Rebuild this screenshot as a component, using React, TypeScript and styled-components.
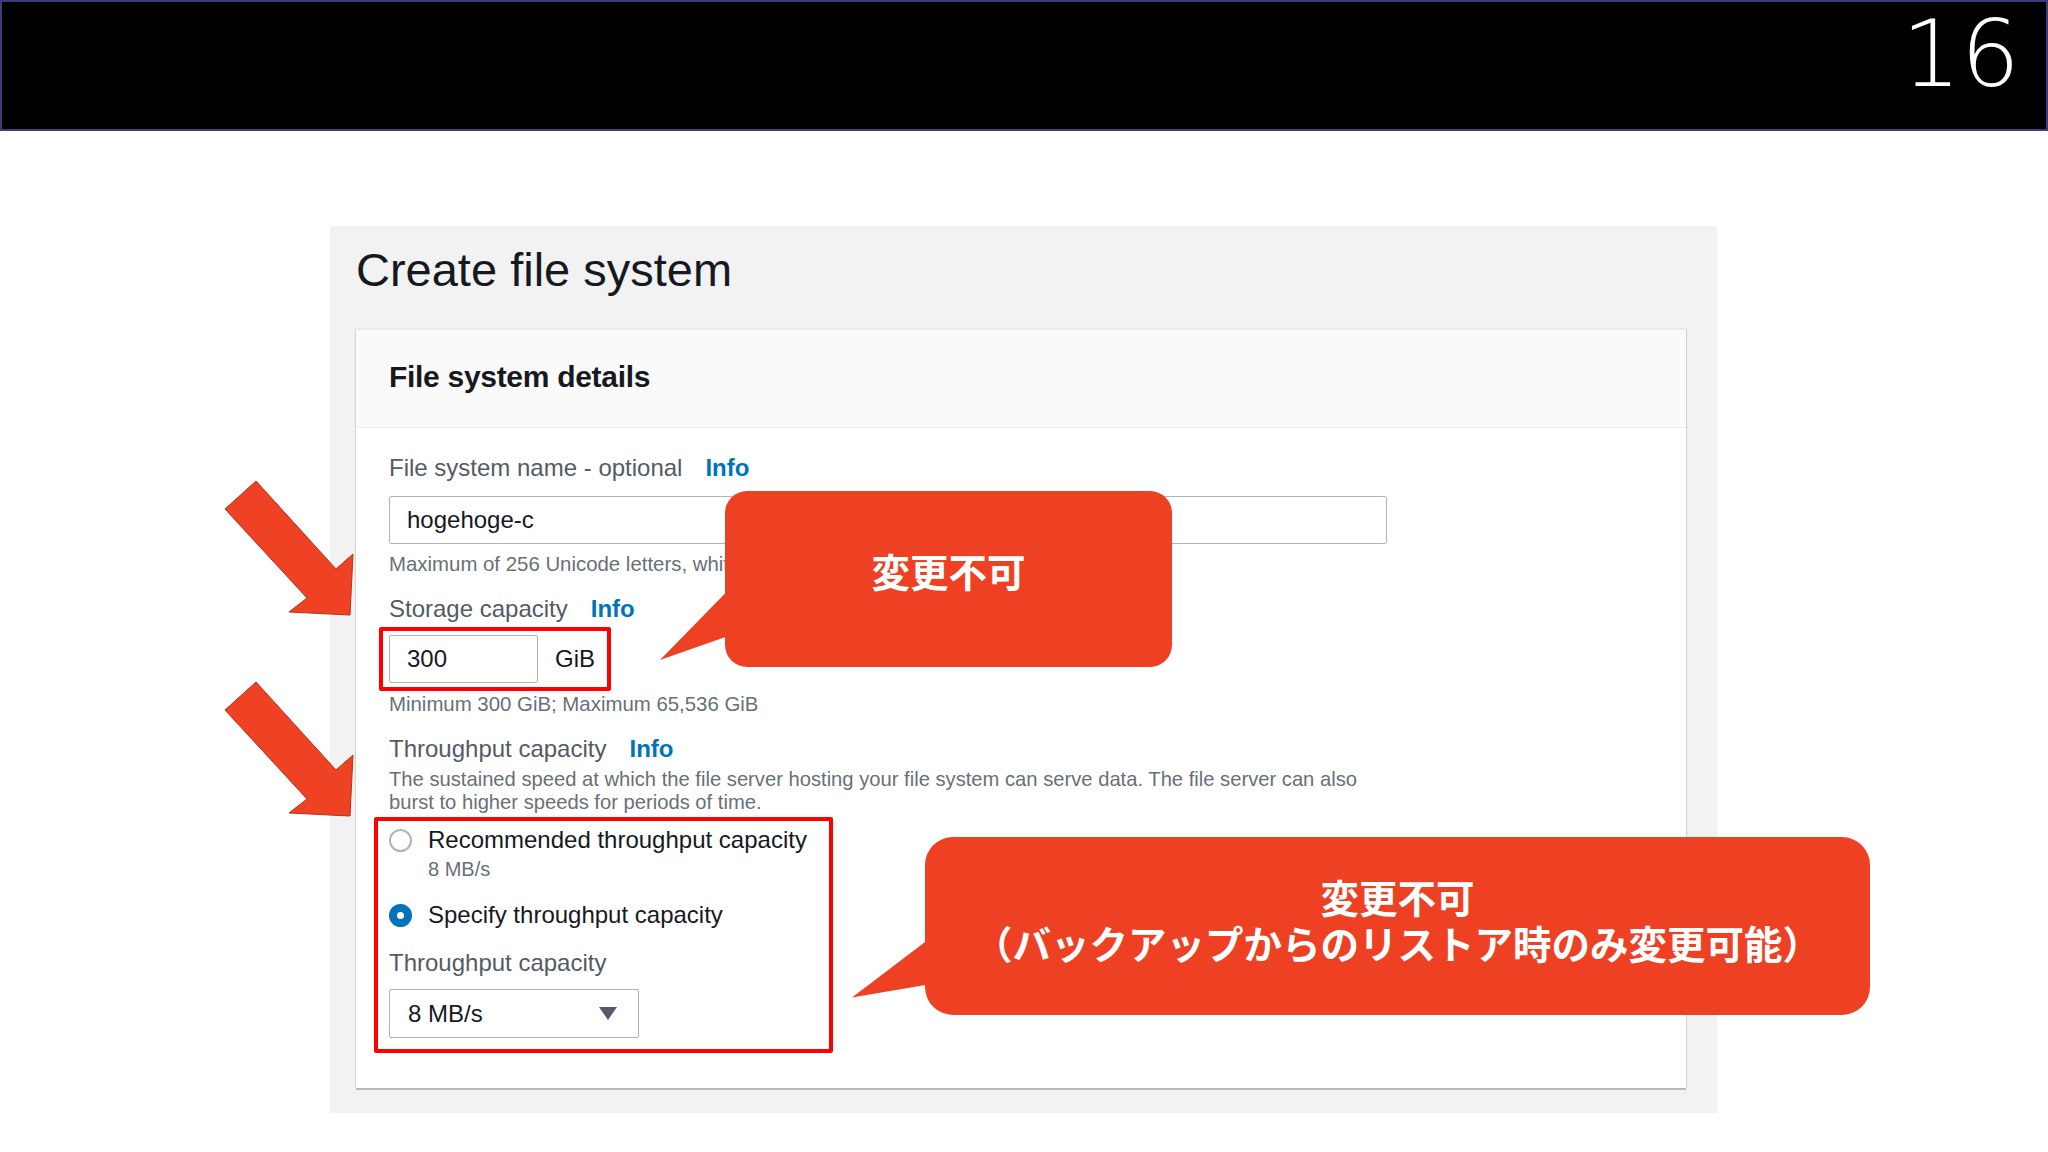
import React from 'react'
import styled, { createGlobalStyle } from 'styled-components'

const GlobalStyle = createGlobalStyle`
  html, body {
    margin: 0;
    padding: 0;
    background: #fff;
  }
  body {
    font-family: 'Liberation Sans', Arial, sans-serif;
  }
`

type Pt = [number, number]

const ARROW_POINTS: Pt[] = [
  [36, 5],
  [116, 93],
  [133, 78],
  [130, 139],
  [69, 136],
  [87, 122],
  [5, 33],
]

const App: React.FC = () => {
  return (
    <Slide>
      <GlobalStyle />
      <TopBar>
        <PageNumber>16</PageNumber>
      </TopBar>

      <Stage>
        <Panel>
          <PageTitle>Create file system</PageTitle>
          <Card>
            <CardHeader>
              <CardTitle>File system details</CardTitle>
            </CardHeader>
            <CardBody>
              <Label>
                File system name - optional<InfoLink>Info</InfoLink>
              </Label>
              <TextInput $width={998} readOnly defaultValue="hogehoge-c" />
              <Hint $gap={8}>
                Maximum of 256 Unicode letters, whitespace, and numbers, plus + - = . _ : /
              </Hint>

              <Label $gap={18}>
                Storage capacity<InfoLink>Info</InfoLink>
              </Label>
              <StorageHighlight>
                <TextInput $width={149} readOnly defaultValue="300" />
                <Unit>GiB</Unit>
              </StorageHighlight>
              <Hint $gap={1}>Minimum 300 GiB; Maximum 65,536 GiB</Hint>

              <Label $gap={18}>
                Throughput capacity<InfoLink>Info</InfoLink>
              </Label>
              <Description>
                The sustained speed at which the file server hosting your file system can serve data. The file
                server can also burst to higher speeds for periods of time.
              </Description>

              <ThroughputHighlight>
                <RadioOption>
                  <RadioCircle $checked={false} />
                  <RadioText>
                    <RadioLabel>Recommended throughput capacity</RadioLabel>
                    <RadioSub>8 MB/s</RadioSub>
                  </RadioText>
                </RadioOption>
                <RadioOption $gap={19}>
                  <RadioCircle $checked />
                  <RadioText>
                    <RadioLabel>Specify throughput capacity</RadioLabel>
                  </RadioText>
                </RadioOption>

                <Label $gap={18}>Throughput capacity</Label>
                <Select>
                  <span>8 MB/s</span>
                  <svg width="18" height="13" viewBox="0 0 18 13">
                    <path d="M0 0 H18 L9 13 Z" fill="#545b64" />
                  </svg>
                </Select>
              </ThroughputHighlight>
            </CardBody>
          </Card>
        </Panel>
      </Stage>

      <Arrow $top={476} width="140" height="140" viewBox="0 0 140 140">
        <polygon points={ARROW_POINTS.map((p) => p.join(',')).join(' ')} />
      </Arrow>
      <Arrow $top={677} width="140" height="140" viewBox="0 0 140 140">
        <polygon points={ARROW_POINTS.map((p) => p.join(',')).join(' ')} />
      </Arrow>

      <Callout $x={725} $y={491} $w={447} $h={176} $r={22} $pb={18}>
        <CalloutTail tipX={-65.5} tipY={169} y1={102} y2={146} height={176} />
        <CalloutLine>変更不可</CalloutLine>
      </Callout>

      <Callout $x={925} $y={837} $w={945} $h={178} $r={28} $pb={14}>
        <CalloutTail tipX={-73.4} tipY={160.5} y1={104.7} y2={148} height={178} />
        <CalloutLine>変更不可</CalloutLine>
        <CalloutLine>（バックアップからのリストア時のみ変更可能）</CalloutLine>
      </Callout>
    </Slide>
  )
}

const CalloutTail: React.FC<{ tipX: number; tipY: number; y1: number; y2: number; height: number }> = ({
  tipX,
  tipY,
  y1,
  y2,
  height,
}) => {
  const base = -tipX
  const w = base + 14
  const points = [
    [0, tipY],
    [base, y1],
    [w, y1],
    [w, y2],
    [base, y2],
  ]
  return (
    <TailSvg style={{ left: tipX }} width={w} height={height} viewBox={`0 0 ${w} ${height}`}>
      <polygon points={points.map((p) => p.join(',')).join(' ')} fill="#ee4124" />
    </TailSvg>
  )
}

const Slide = styled.div`
  position: relative;
  width: 2048px;
  height: 1152px;
  overflow: hidden;
  background: #fff;
`

const TopBar = styled.header`
  box-sizing: border-box;
  height: 131px;
  background: #000;
  box-shadow: inset 0 0 0 2px #3b3e7a;
  display: flex;
  justify-content: flex-end;
  align-items: flex-start;
  padding: 0 28px 0 0;
`

const PageNumber = styled.div`
  font-family: 'DejaVu Sans', 'Liberation Sans', sans-serif;
  font-stretch: condensed;
  font-weight: 200;
  font-size: 93px;
  line-height: 108px;
  color: #fff;
`

const Stage = styled.main`
  padding: 95px 0 0 330px;
`

const Panel = styled.section`
  box-sizing: border-box;
  width: 1387px;
  height: 887px;
  background: #f2f2f3;
  padding: 16px 31px 0 26px;
`

const PageTitle = styled.h1`
  margin: 0 0 31px;
  font-size: 47px;
  line-height: 56px;
  font-weight: 400;
  color: #16191f;
`

const Card = styled.div`
  background: #fff;
  border-top: 1px solid #eaeded;
  box-shadow:
    0 2px 0 0 #b9b9b9,
    1px 0 1px 0 rgba(0, 28, 36, 0.12),
    -1px 0 1px 0 rgba(0, 28, 36, 0.12);
`

const CardHeader = styled.div`
  background: #fafafa;
  border-bottom: 1px solid #eaeded;
  padding: 29px 33px 32px;
`

const CardTitle = styled.h2`
  margin: 0;
  font-size: 30px;
  line-height: 36px;
  font-weight: 700;
  letter-spacing: -0.3px;
  color: #16191f;
`

const CardBody = styled.div`
  padding: 25px 33px 35px;
`

const Label = styled.div<{ $gap?: number }>`
  margin-top: ${(p) => p.$gap ?? 0}px;
  font-size: 24px;
  line-height: 30px;
  color: #545b64;
`

const InfoLink = styled.span`
  margin-left: 23px;
  color: #0073bb;
  font-weight: 700;
`

const TextInput = styled.input<{ $width: number }>`
  display: block;
  box-sizing: border-box;
  width: ${(p) => p.$width}px;
  height: 48px;
  margin: 13px 0 0;
  padding: 0 17px;
  border: 1px solid #aab7b8;
  border-radius: 2px;
  background: #fff;
  font-family: 'Liberation Sans', Arial, sans-serif;
  font-size: 24px;
  color: #16191f;
  outline: none;
`

const Hint = styled.div<{ $gap?: number }>`
  margin-top: ${(p) => p.$gap ?? 0}px;
  font-size: 20.4px;
  line-height: 24px;
  color: #687078;
`

const Description = styled.div`
  max-width: 1000px;
  margin-top: 4px;
  font-size: 20.2px;
  line-height: 23px;
  color: #687078;
`

const StorageHighlight = styled.div`
  display: flex;
  align-items: center;
  gap: 17px;
  width: fit-content;
  margin: 3px 0 0 -10px;
  padding: 4px 12px 4px 6px;
  border: 4px solid #ff0000;
  border-radius: 2px;

  ${TextInput} {
    margin: 0;
  }
`

const Unit = styled.span`
  font-size: 24px;
  color: #16191f;
`

const ThroughputHighlight = styled.div`
  box-sizing: border-box;
  width: 459px;
  margin: 3px 0 0 -15px;
  padding: 4px 11px 11px;
  border: 4px solid #ff0000;
  border-radius: 2px;
`

const RadioOption = styled.div<{ $gap?: number }>`
  display: flex;
  align-items: flex-start;
  gap: 16px;
  margin-top: ${(p) => p.$gap ?? 0}px;
`

const RadioCircle = styled.span<{ $checked: boolean }>`
  box-sizing: border-box;
  flex: none;
  width: 23px;
  height: 23px;
  margin-top: 4px;
  border-radius: 50%;
  background: #fff;
  border: ${(p) => (p.$checked ? '8px solid #0073bb' : '2px solid #aab7b8')};
`

const RadioText = styled.div`
  display: flex;
  flex-direction: column;
`

const RadioLabel = styled.span`
  font-size: 24px;
  line-height: 30px;
  color: #16191f;
`

const RadioSub = styled.span`
  margin-top: 2px;
  font-size: 20px;
  line-height: 24px;
  color: #687078;
`

const Select = styled.div`
  box-sizing: border-box;
  display: flex;
  align-items: center;
  justify-content: space-between;
  width: 250px;
  height: 49px;
  margin-top: 11px;
  padding: 0 21px 0 18px;
  border: 1px solid #aab7b8;
  border-radius: 2px;
  font-size: 24px;
  color: #16191f;
`

const Arrow = styled.svg<{ $top: number }>`
  position: absolute;
  left: 220px;
  top: ${(p) => p.$top}px;

  polygon {
    fill: #ef4123;
    stroke: #b9301b;
    stroke-width: 1;
  }
`

const Callout = styled.div<{ $x: number; $y: number; $w: number; $h: number; $r: number; $pb: number }>`
  position: absolute;
  left: ${(p) => p.$x}px;
  top: ${(p) => p.$y}px;
  width: ${(p) => p.$w}px;
  height: ${(p) => p.$h}px;
  box-sizing: border-box;
  padding-bottom: ${(p) => p.$pb}px;
  border-radius: ${(p) => p.$r}px;
  background: #ee4124;
  display: flex;
  flex-direction: column;
  align-items: center;
  justify-content: center;
  color: #fff;
  font-family: 'Noto Sans CJK JP', 'Noto Sans', sans-serif;
  font-weight: 700;
  font-size: 38.5px;
  line-height: 46px;
  text-align: center;
`

const TailSvg = styled.svg`
  position: absolute;
  top: 0;
`

const CalloutLine = styled.div`
  position: relative;
  white-space: nowrap;
`

export default App
